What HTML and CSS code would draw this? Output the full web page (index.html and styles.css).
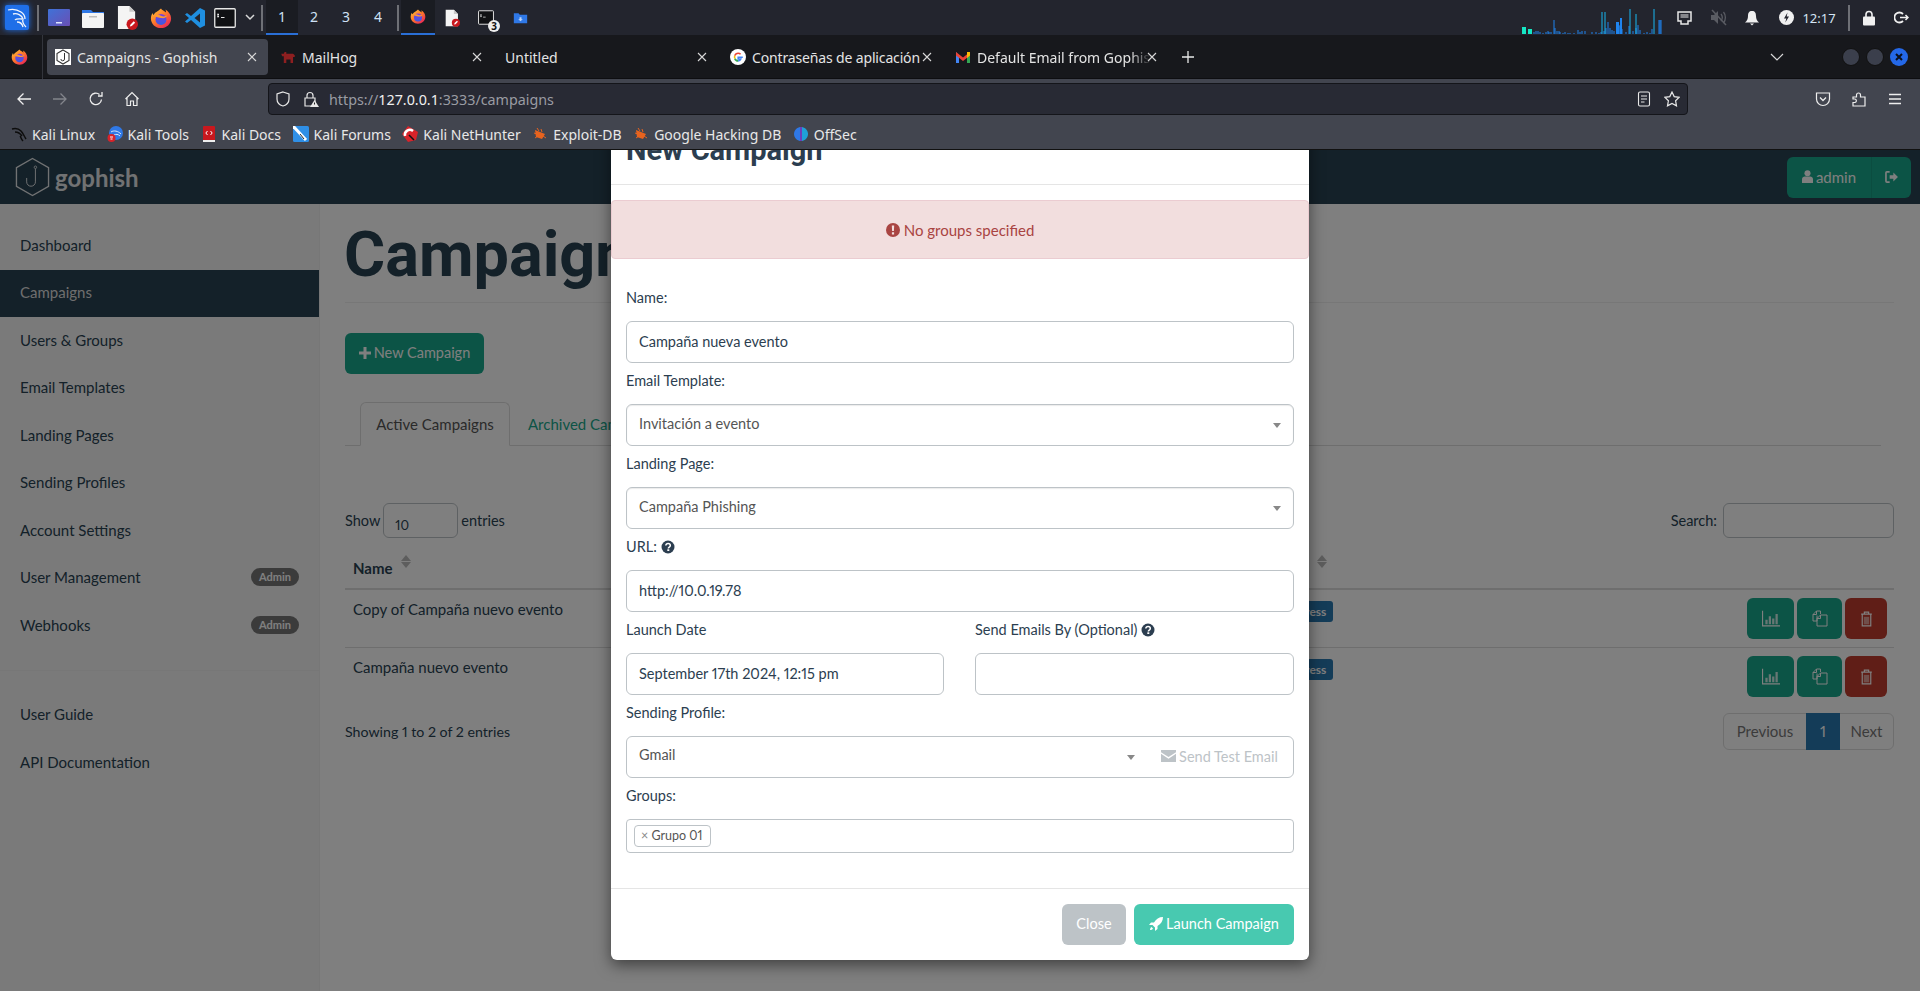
FILE: index.html
```html
<!DOCTYPE html>
<html lang="en">
<head>
    <meta charset="UTF-8">
    <meta name="viewport" content="width=device-width, initial-scale=1.0">
    <title>Campaigns - Gophish</title>
    <link rel="stylesheet" href="styles.css">
</head>
<body>
    <svg class="svg-defs" aria-hidden="true">
        <defs>
            <linearGradient id="ffOuter" x1="0" y1="0" x2="0.8" y2="1">
                <stop offset="0" stop-color="#ffc83a"/>
                <stop offset="0.5" stop-color="#ff7a2a"/>
                <stop offset="1" stop-color="#e8215a"/>
            </linearGradient>
            <linearGradient id="ffInner" x1="0" y1="0" x2="0" y2="1">
                <stop offset="0" stop-color="#7b3ee0"/>
                <stop offset="1" stop-color="#3a5be0"/>
            </linearGradient>
            <linearGradient id="screenGrad" x1="0" y1="0" x2="1" y2="1">
                <stop offset="0" stop-color="#3f72d8"/>
                <stop offset="1" stop-color="#6a4fb4"/>
            </linearGradient>
            <symbol id="firefox" viewBox="0 0 24 24">
                <path d="M12 1.5c1 2 3.800 2.500 5.500 4.500 0-1.300-.2-2.300-.6-3.300C20.500 5 23 8.500 23 12.500 23 18.600 18 23 12 23S1 18.500 1 12.500c0-2.300.7-4.300 1.800-6 .2 1 .6 1.800 1.200 2.300C5 5.500 8.500 5 12 1.500z" fill="url(#ffOuter)"/>
                <circle cx="12" cy="13.500" r="6" fill="url(#ffInner)"/>
                <path d="M4 9c2.500-1.500 5-1 8 .5 3 1.500 5 .5 7-.5-1.500 3-4 3.500-6.500 3-3-.5-6-1-8.500-3z" fill="#ff9a2e"/>
            </symbol>
            <symbol id="docEdit" viewBox="0 0 22 26">
                <path d="M1 1h12l6 6v18H1z" fill="#f4f4f4"/>
                <path d="M13 1l6 6h-6z" fill="#c8c8c8"/>
                <circle cx="16" cy="20" r="6" fill="#c9181e"/>
                <path d="M13.500 22.500l.5-2 3.500-3.500 1.500 1.500-3.500 3.500z" fill="#fff"/>
            </symbol>
            <symbol id="termBox" viewBox="0 0 22 20">
                <rect x="0.750" y="0.750" width="20.500" height="18.500" rx="1" fill="#101114" stroke="#e8e8e8" stroke-width="1.300"/>
                <path d="M4 5.500v4M3.500 6.500h1.500M3.500 8.500h1.500M7 9.500h3.500" stroke="#e8e8e8" stroke-width="1" fill="none"/>
            </symbol>
            <symbol id="folderBlue" viewBox="0 0 22 18">
                <path d="M1 2h7l2 2h11v13H1z" fill="#2f78e6"/>
                <path d="M9.500 8h3v3h2l-3.500 3-3.500-3h2z" fill="#bcd4f8"/>
            </symbol>
            <symbol id="closeX" viewBox="0 0 12 12">
                <path d="M2 2l8 8M10 2l-8 8" stroke="#d8d8d8" stroke-width="1.100" fill="none"/>
            </symbol>
            <symbol id="bug" viewBox="0 0 16 16">
                <path d="M3 4l10 4-3 5-6-2z" fill="#e8631e"/>
                <path d="M5 2l2 3M2 7l3 1M3 12l3-2M9 3l1 3M14 12l-3-2" stroke="#e8631e" stroke-width="1" fill="none"/>
            </symbol>
            <symbol id="icoChart" viewBox="0 0 16 14">
                <path d="M.5 0v13.500H16" stroke="currentColor" stroke-width="1" fill="none"/>
                <path d="M3 8h2v4H3zM6 5h2v7H6zM9 7h2v5H9zM12 3h2v9h-2z" fill="currentColor" opacity="0.800"/>
            </symbol>
            <symbol id="icoCopy" viewBox="0 0 16 17">
                <path d="M5 5.500V11H1V4.500L4.500 1h4v3M1 4.500h3.500V1M5 8.500L8.500 5H15v11H5zM5 8.500h3.500V5" stroke="currentColor" stroke-width="1" fill="none"/>
            </symbol>
            <symbol id="icoTrash" viewBox="0 0 12 15">
                <path d="M1 3h10M4 3V1h4v2M2 3v11h8V3" stroke="currentColor" stroke-width="1.100" fill="none"/>
                <path d="M3.500 5.500h5v7h-5z" fill="currentColor" opacity="0.500"/>
            </symbol>
            <symbol id="icoQuestion" viewBox="0 0 14 14">
                <circle cx="7" cy="7" r="6.500" fill="#2c3e50"/>
                <path d="M4.800 5.500C5 4 6 3.600 7.100 3.600c1.300 0 2.200.8 2.200 1.900 0 1.600-2 1.600-2 3" stroke="#fff" stroke-width="1.500" fill="none"/>
                <rect x="6.300" y="9.300" width="2" height="1.700" fill="#fff"/>
            </symbol>
        </defs>
    </svg>

    <!-- desktop panel -->
    <div class="panel">
        <div class="panel-cell"><svg class="kali-logo" viewBox="0 0 24 25"><rect width="24" height="25" rx="2" fill="#1f6fe8"/><path d="M3 5c5-1.500 10 0 13 2 3 2 4 4 4 7M8 9c4-1 9 1 10 5-1 3 0 5 3 8M17 14c-3 0-6-.5-7 1M12 17c3 0 5 1 6 5" stroke="#f2f6fd" stroke-width="1.300" fill="none"/></svg></div>
        <span class="panel-sep"></span>
        <div class="panel-cell"><svg width="22" height="17" viewBox="0 0 22 17"><rect width="22" height="17" rx="1" fill="url(#screenGrad)"/><rect x="8" y="13" width="6" height="1.500" fill="#dfe6ff"/></svg></div>
        <div class="panel-cell"><svg width="22" height="20" viewBox="0 0 22 20"><path d="M0 2h9l2 2h11v3H0z" fill="#2f78e6"/><rect y="5" width="22" height="15" rx="1" fill="#f4f4f4"/><rect x="7" y="8" width="8" height="1.500" fill="#bdbdbd"/></svg></div>
        <div class="panel-cell"><svg width="21" height="25"><use href="#docEdit"/></svg></div>
        <div class="panel-cell"><svg width="22" height="24"><use href="#firefox"/></svg></div>
        <div class="panel-cell"><svg width="22" height="22" viewBox="0 0 22 22"><path d="M16 1l5 2.500v15L16 21 7 13l-4 3-2-1.500L5 11 1 7.500 3 6l4 3z" fill="#1f8fe0"/><path d="M16 6.500L10.500 11l5.500 4.500z" fill="#23252e"/></svg></div>
        <div class="panel-cell panel-term"><svg width="22" height="20"><use href="#termBox"/></svg></div>
        <div class="panel-chevron"><svg width="10" height="7" viewBox="0 0 10 7"><path d="M1 1l4 4 4-4" stroke="#d8d8d8" stroke-width="1.500" fill="none"/></svg></div>
        <span class="panel-sep panel-sep-b"></span>
        <div class="workspace workspace-on">1</div>
        <div class="workspace">2</div>
        <div class="workspace">3</div>
        <div class="workspace">4</div>
        <span class="panel-sep panel-sep-c"></span>
        <div class="panel-cell task-on"><svg width="16" height="17"><use href="#firefox"/></svg></div>
        <div class="panel-cell"><svg width="15" height="18"><use href="#docEdit"/></svg></div>
        <div class="panel-cell task-term">
            <svg width="16" height="15"><use href="#termBox"/></svg>
            <span class="task-count">3</span>
        </div>
        <div class="panel-cell"><svg width="15" height="12"><use href="#folderBlue"/></svg></div>

        <svg class="netgraph" width="140" height="34" viewBox="0 0 140 34">
            <path d="M0 27h4v7H0zM6 29h4v5H6z" fill="#15e6c4"/>
            <path d="M12 32v2M14 31v3M16 31v3M18 32v2M21 33v1M24 32v2M26 31v3M27 32v2M29 32v2M32 20v14M33 28v6M35 31v3M37 31v3M38 32v2M41 33v1M43 32v2M46 33v1M48 33v1M52 33v1M56 30v4M58 32v2M60 31v3M63 31v3M70 32v2M74 32v2M77 33v1M79 32v2M82 31v3M84 28v6M86 22v12M88 28v6M90 30v4M92 31v3M97 26v8M98 25v9M100 29v5M104 32v2M107 26v8M111 31v3M114 28v6M116 25v9M118 30v4M122 33v1M125 32v2M128 33v1M130 29v5M138 20v14M139 20v14M137 20v14" stroke="#1f84ee" stroke-width="1" fill="none"/>
            <path d="M80 12v22M83 12v22M108 9v25M114 14v20M132 9v25" stroke="#18b7f0" stroke-width="1" fill="none"/>
            <path d="M79 26v8M85 26v8M94 22h3v12h-3zM98 18h2v16h-2z" fill="#1f84ee"/>
        </svg>
        <div class="panel-cell tray-first"><svg width="15" height="14" viewBox="0 0 15 14"><path d="M1 1h13v9h-3v3H4v-3H1z" fill="none" stroke="#e8e8e8" stroke-width="1.500"/><path d="M3.500 4h8M3.500 6h8" stroke="#e8e8e8" stroke-width="1"/></svg></div>
        <div class="panel-cell"><svg width="17" height="17" viewBox="0 0 17 17"><path d="M1 6h3l4-4v13l-4-4H1z" fill="#5a5c63"/><path d="M11 5c1.500 2 1.500 5 0 7M13.500 3c2.500 3 2.500 8 0 11" stroke="#5a5c63" stroke-width="1.300" fill="none"/><path d="M2 1l14 15" stroke="#5a5c63" stroke-width="1.500"/></svg></div>
        <div class="panel-cell"><svg width="14" height="16" viewBox="0 0 14 16"><path d="M7 1c3 0 4 2 4 5 0 3 1 5 3 6.500H0C2 11 3 9 3 6c0-3 1-5 4-5z" fill="#f0f0f0"/><path d="M5 13.500h4l-2 2z" fill="#f0f0f0"/></svg></div>
        <div class="panel-cell"><svg width="15" height="15" viewBox="0 0 15 15"><circle cx="7.500" cy="7.500" r="7.500" fill="#f0f0f0"/><path d="M8.500 2.500L5 8.500h2.300l-1 4 3.700-6H7.700z" fill="#23252e"/></svg></div>
        <div class="panel-clock">12:17</div>
        <span class="panel-sep panel-sep-d"></span>
        <div class="panel-cell panel-cell-sm"><svg width="12" height="16" viewBox="0 0 12 16"><path d="M3 7V4.500a3 3 0 0 1 6 0V7" stroke="#f0f0f0" stroke-width="1.600" fill="none"/><rect y="6.500" width="12" height="9" rx="1" fill="#f0f0f0"/></svg></div>
        <div class="panel-cell panel-cell-sm"><svg width="15" height="13" viewBox="0 0 15 13"><path d="M9 3a5 5 0 1 0 0 7" stroke="#f0f0f0" stroke-width="1.800" fill="none"/><path d="M6 6.500h8M11.500 4l2.500 2.500-2.500 2.500" stroke="#f0f0f0" stroke-width="1.500" fill="none"/></svg></div>
    </div>

    <!-- browser tabs -->
    <div class="tabstrip">
        <div class="ff-menu"><svg width="17" height="18"><use href="#firefox"/></svg></div>
        <div class="browser-tab browser-tab-on">
            <svg class="fav" viewBox="0 0 16 16"><rect width="16" height="16" fill="#fff"/><path d="M8 1l6 3.500v7L8 15l-6-3.500v-7z" fill="none" stroke="#333" stroke-width="1.100"/><path d="M9.500 4v6a1.800 1.800 0 0 1-3.600 0" fill="none" stroke="#333" stroke-width="1"/></svg>
            <span class="tab-title">Campaigns - Gophish</span>
            <svg class="tab-close"><use href="#closeX"/></svg>
        </div>
        <div class="browser-tab">
            <svg class="fav" viewBox="-1.500 -1.500 19 19"><path d="M0 4h3l1-2h2v2h8l2 2v2h-2v7h-3v-4H6v4H3V7H1z" fill="#8e1f20"/></svg>
            <span class="tab-title">MailHog</span>
            <svg class="tab-close"><use href="#closeX"/></svg>
        </div>
        <div class="browser-tab browser-tab-plain">
            <span class="tab-title">Untitled</span>
            <svg class="tab-close"><use href="#closeX"/></svg>
        </div>
        <div class="browser-tab">
            <svg class="fav" viewBox="0 0 16 16"><circle cx="8" cy="8" r="8" fill="#fff"/><path d="M12.800 8.200H8.200v1.800h2.600c-.4 1.200-1.400 1.900-2.700 1.900" fill="none" stroke="#4285f4" stroke-width="1.600"/><path d="M8.100 11.900c-1.500 0-2.800-1-3.300-2.300" fill="none" stroke="#34a853" stroke-width="1.600"/><path d="M4.800 9.600c-.3-1-.3-2 0-3" fill="none" stroke="#fbbc05" stroke-width="1.600"/><path d="M4.800 6.600c.5-1.400 1.800-2.400 3.300-2.400 1 0 1.800.3 2.500 1" fill="none" stroke="#ea4335" stroke-width="1.600"/></svg>
            <span class="tab-title tab-title-fit">Contraseñas de aplicación</span>
            <svg class="tab-close"><use href="#closeX"/></svg>
        </div>
        <div class="browser-tab">
            <svg class="fav" viewBox="0 0 16 16"><path d="M1 3v11h3V7z" fill="#4285f4"/><path d="M15 3v11h-3V7z" fill="#34a853"/><path d="M1 3l7 5.500L15 3v3.500L8 12 1 6.500z" fill="#ea4335"/><path d="M12 3h3v3.500L12 9z" fill="#fbbc05"/></svg>
            <span class="tab-title tab-title-fade">Default Email from Gophish</span>
            <svg class="tab-close"><use href="#closeX"/></svg>
        </div>
        <svg class="tab-new" viewBox="0 0 14 14"><path d="M7 1v12M1 7h12" stroke="#e8e8e8" stroke-width="1.300" fill="none"/></svg>
        <svg class="tab-list" viewBox="0 0 14 8"><path d="M1 1l6 6 6-6" stroke="#d8d8d8" stroke-width="1.200" fill="none"/></svg>
        <span class="win-btn"></span>
        <span class="win-btn"></span>
        <span class="win-btn win-btn-close"><svg width="8" height="8" viewBox="0 0 8 8"><path d="M1 1l6 6M7 1L1 7" stroke="#0a0f1c" stroke-width="2"/></svg></span>
    </div>

    <!-- browser toolbar -->
    <div class="toolbar">
        <div class="nav-btns">
            <svg class="tool-ico" viewBox="0 0 16 16"><path d="M15 8H2M7.500 2.500L2 8l5.500 5.500" stroke="#eee" stroke-width="1.300" fill="none"/></svg>
            <svg class="tool-ico" viewBox="0 0 16 16"><path d="M1 8h13M8.500 2.500L14 8l-5.500 5.500" stroke="#83858c" stroke-width="1.300" fill="none"/></svg>
            <svg class="tool-ico" viewBox="0 0 16 16"><path d="M13.500 8.500A5.700 5.700 0 1 1 11.500 3.500M14 1v4h-4" stroke="#eee" stroke-width="1.300" fill="none"/></svg>
            <svg class="tool-ico" viewBox="0 0 16 16"><path d="M1.500 8L8 1.500 14.500 8M3 7v7.500h3.500V10h3v4.500H13V7" stroke="#eee" stroke-width="1.200" fill="none"/></svg>
        </div>
        <div class="urlbar">
            <svg class="url-ico" viewBox="0 0 16 16"><path d="M8 1l6 2v5c0 3.500-2.500 6-6 7-3.500-1-6-3.500-6-7V3z" stroke="#e8e8e8" stroke-width="1.200" fill="none"/></svg>
            <svg class="url-ico url-lock" viewBox="0 0 16 16"><path d="M4 7V4.500a3 3 0 0 1 6 0V7M2 7h10v8H2z" stroke="#e8e8e8" stroke-width="1.200" fill="none"/><path d="M11.500 9L16 16H7z" fill="#e8e8e8"/><path d="M11.500 11.500v2" stroke="#222" stroke-width="1"/></svg>
            <span class="url-text">https://<b>127.0.0.1</b>:3333/campaigns</span>
            <svg class="url-end" viewBox="0 0 16 16"><rect x="2.500" y="1" width="11" height="14" rx="1.500" stroke="#e8e8e8" stroke-width="1.100" fill="none"/><path d="M5 5h6M5 8h6M5 11h3.500" stroke="#e8e8e8" stroke-width="1"/></svg>
            <svg class="url-end url-star" viewBox="0 0 16 16"><path d="M8 1l2.200 4.600 5 .7-3.600 3.500.9 5L8 12.400l-4.500 2.400.9-5L.8 6.300l5-.7z" stroke="#e8e8e8" stroke-width="1.200" fill="none"/></svg>
        </div>
        <svg class="tool-ico tool-pocket" viewBox="0 0 16 16"><path d="M1.500 2h13v6a6.500 6.500 0 0 1-13 0z" stroke="#eee" stroke-width="1.200" fill="none"/><path d="M5 6.500l3 3 3-3" stroke="#eee" stroke-width="1.300" fill="none"/></svg>
        <svg class="tool-ico" viewBox="0 0 16 16"><path d="M2 6h3.500V4a2 2 0 0 1 4 0v2H14v9H2v-3.500h2a1.800 1.800 0 0 0 0-3.500H2z" stroke="#eee" stroke-width="1.200" fill="none"/></svg>
        <svg class="tool-ico" viewBox="0 0 16 16"><path d="M2 3.500h12M2 8h12M2 12.500h12" stroke="#eee" stroke-width="1.300" fill="none"/></svg>
    </div>

    <!-- bookmarks -->
    <div class="bookmarks">
        <div class="bookmark"><svg class="bm-ico" viewBox="0 0 16 16"><path d="M1 3c4-1 7 0 9 2 2 2 3 5 5 8M4 6c3 0 5 1 7 4M9 10c1 1 1 3 3 5" stroke="#0d0d0d" stroke-width="1.500" fill="none"/></svg>Kali Linux</div>
        <div class="bookmark"><svg class="bm-ico" viewBox="0 0 16 16"><circle cx="9" cy="7" r="7" fill="#2f78e6"/><path d="M4 6c3-2 7-1 10 2M7 9c2-1 4-1 6 1" stroke="#d8e6fb" stroke-width="1" fill="none"/><circle cx="4.500" cy="12" r="4" fill="#d8232a"/><path d="M3 11h3M3.500 13h2" stroke="#fff" stroke-width="1"/></svg>Kali Tools</div>
        <div class="bookmark"><svg class="bm-ico" viewBox="0 0 16 16"><rect x="2" y="0" width="12" height="15" rx="1" fill="#c9181e"/><path d="M2 14h12v2H2z" fill="#eee"/><path d="M6.500 5L4.800 7l1.700 2M9.500 5l1.700 2-1.700 2" stroke="#fff" stroke-width="1" fill="none"/></svg>Kali Docs</div>
        <div class="bookmark"><svg class="bm-ico" viewBox="0 0 16 16"><rect width="16" height="16" rx="1.500" fill="#2f8fe6"/><path d="M0 0l13 14" stroke="#fff" stroke-width="3"/><path d="M7 8l4 5" stroke="#222" stroke-width="1"/></svg>Kali Forums</div>
        <div class="bookmark"><svg class="bm-ico" viewBox="0 0 16 16"><path d="M6 0l10 6-2 8-8 2-6-8z" fill="#d8232a"/><path d="M3 10a5 5 0 0 1 8-5" stroke="#fff" stroke-width="2.500" fill="none"/><path d="M7 9l5 5" stroke="#111" stroke-width="1.500"/></svg>Kali NetHunter</div>
        <div class="bookmark"><svg class="bm-ico"><use href="#bug"/></svg>Exploit-DB</div>
        <div class="bookmark"><svg class="bm-ico"><use href="#bug"/></svg>Google Hacking DB</div>
        <div class="bookmark"><svg class="bm-ico" viewBox="0 0 16 16"><path d="M7 1C3 2 1 5 1 8s2 6 6 7z" fill="#2f78e6"/><path d="M9 1c4 1 6 4 6 7s-2 6-6 7z" fill="#1fa0d8"/><path d="M8 1v14" stroke="#7a3ee0" stroke-width="1.500"/></svg>OffSec</div>
    </div>

    <!-- gophish page -->
    <div class="page">
        <nav class="navbar">
            <svg class="logo-mark" viewBox="0 0 36 40"><path d="M18 1l16.500 9.500v19L18 39 1.500 29.500v-19z" fill="none" stroke="#e2e4e6" stroke-width="1.400"/><circle cx="21" cy="10" r="1.300" fill="none" stroke="#e2e4e6" stroke-width="0.900"/><path d="M21 11.500V25a4.500 4.500 0 0 1-9 0v-4" fill="none" stroke="#e2e4e6" stroke-width="1"/></svg>
            <span class="logo-text">gophish</span>
            <div class="user-group">
                <div class="user-btn">
                    <svg class="user-ico" viewBox="0 0 12 14"><circle cx="6" cy="3.500" r="3.300" fill="currentColor"/><path d="M0 14V10c0-2 1.500-3 3-3h6c1.500 0 3 1 3 3v4z" fill="currentColor"/></svg>admin
                </div>
                <div class="user-out">
                    <svg class="out-ico" viewBox="0 0 14 13"><path d="M5 1H2a1 1 0 0 0-1 1v9a1 1 0 0 0 1 1h3" fill="none" stroke="currentColor" stroke-width="1.800"/><path d="M5 4.500h4V1.500l5 5-5 5v-3H5z" fill="currentColor"/></svg>
                </div>
            </div>
        </nav>

        <div class="layout">
            <aside class="sidebar">
                <ul class="side-nav">
                    <li>Dashboard</li>
                    <li class="side-on">Campaigns</li>
                    <li>Users &amp; Groups</li>
                    <li>Email Templates</li>
                    <li>Landing Pages</li>
                    <li>Sending Profiles</li>
                    <li>Account Settings</li>
                    <li>User Management <span class="side-badge">Admin</span></li>
                    <li>Webhooks <span class="side-badge">Admin</span></li>
                </ul>
                <div class="side-divider"></div>
                <ul class="side-nav">
                    <li>User Guide</li>
                    <li>API Documentation</li>
                </ul>
            </aside>

            <main class="content">
                <div class="page-header"><h1>Campaigns</h1></div>
                <button class="btn btn-new"><svg class="plus-ico" viewBox="0 0 12 12"><path d="M4.500 0h3v4.500H12v3H7.500V12h-3V7.500H0v-3h4.500z" fill="currentColor"/></svg>New Campaign</button>
                <div class="tabs">
                    <div class="tab tab-on">Active Campaigns</div>
                    <div class="tab tab-link">Archived Campaigns</div>
                </div>
                <div class="table-top">
                    <div class="entries">Show <span class="entries-box">10</span> entries</div>
                    <div class="search">Search: <span class="search-box"></span></div>
                </div>
                <div class="row row-head">
                    <div class="cell-name">Name <span class="sort"><i class="sort-up"></i><i class="sort-down"></i></span></div>
                    <div class="cell-status">Status <span class="sort sort-status"><i class="sort-up"></i><i class="sort-down"></i></span></div>
                </div>
                <div class="row">
                    <div class="cell-name">Copy of Campaña nuevo evento</div>
                    <div class="cell-status"><span class="status-badge">In progress</span></div>
                    <div class="cell-actions">
                        <span class="act act-chart"><svg class="act-ico"><use href="#icoChart"/></svg></span>
                        <span class="act act-copy"><svg class="act-ico"><use href="#icoCopy"/></svg></span>
                        <span class="act act-del"><svg class="act-ico act-ico-sm"><use href="#icoTrash"/></svg></span>
                    </div>
                </div>
                <div class="row row-last">
                    <div class="cell-name">Campaña nuevo evento</div>
                    <div class="cell-status"><span class="status-badge">In progress</span></div>
                    <div class="cell-actions">
                        <span class="act act-chart"><svg class="act-ico"><use href="#icoChart"/></svg></span>
                        <span class="act act-copy"><svg class="act-ico"><use href="#icoCopy"/></svg></span>
                        <span class="act act-del"><svg class="act-ico act-ico-sm"><use href="#icoTrash"/></svg></span>
                    </div>
                </div>
                <div class="table-bottom">
                    <div class="showing">Showing 1 to 2 of 2 entries</div>
                    <div class="pager">
                        <span class="pager-item pager-prev">Previous</span>
                        <span class="pager-item pager-on">1</span>
                        <span class="pager-item pager-next">Next</span>
                    </div>
                </div>
            </main>
        </div>

        <div class="backdrop"></div>

        <div class="modal">
            <div class="modal-header"><h4>New Campaign</h4></div>
            <div class="alert">
                <svg class="alert-ico" viewBox="0 0 14 14"><circle cx="7" cy="7" r="7" fill="#a94442"/><path d="M5.800 2.500h2.400l-.3 5.500H6.100zM5.900 9.200h2.200v2.200H5.900z" fill="#f2dede"/></svg>No groups specified
            </div>
            <div class="modal-body">
                <label>Name:</label>
                <div class="field">Campaña nueva evento</div>
                <label>Email Template:</label>
                <div class="field field-select">Invitación a evento<i class="caret"></i></div>
                <label>Landing Page:</label>
                <div class="field field-select">Campaña Phishing<i class="caret"></i></div>
                <label>URL: <svg class="help-ico"><use href="#icoQuestion"/></svg></label>
                <div class="field">http://10.0.19.78</div>
                <div class="two-col">
                    <div>
                        <label>Launch Date</label>
                        <div class="field">September 17th 2024, 12:15 pm</div>
                    </div>
                    <div>
                        <label>Send Emails By (Optional) <svg class="help-ico"><use href="#icoQuestion"/></svg></label>
                        <div class="field"></div>
                    </div>
                </div>
                <label>Sending Profile:</label>
                <div class="field field-profile">
                    <div class="profile-select">Gmail<i class="caret"></i></div>
                    <div class="profile-test"><svg class="mail-ico" viewBox="0 0 14 11"><path d="M0 0h14v2L7 6.500 0 2z" fill="currentColor"/><path d="M0 3.500l7 4.500 7-4.500V11H0z" fill="currentColor"/></svg>Send Test Email</div>
                </div>
                <label>Groups:</label>
                <div class="groups"><span class="group-tag"><span class="tag-x">×</span> Grupo 01</span></div>
            </div>
            <div class="modal-footer">
                <button class="btn btn-close">Close</button>
                <button class="btn btn-launch"><svg class="rocket-ico" viewBox="0 0 14 14"><path d="M14 0c-4 0-7 2-9 5.500H2L0 8h3.500L6 10.500V14l2.500-2V9C12 7 14 4 14 0z" fill="currentColor"/><path d="M2.500 10c-1 .5-1.500 2-1.500 3 1 0 2.500-.5 3-1.500z" fill="currentColor"/></svg>Launch Campaign</button>
            </div>
        </div>
    </div>
</body>
</html>
```

FILE: styles.css
```css
* {
    box-sizing: border-box;
}

html, body {
    margin: 0;
    height: 991px;
    overflow: hidden;
}

body {
    font-family: "Noto Sans", sans-serif;
    background-color: #808080;
}

.svg-defs {
    position: absolute;
    width: 0;
    height: 0;
}

/* desktop panel */
.panel {
    height: 35px;
    display: flex;
    align-items: stretch;
    background-color: #23252e;
    color: #e8e8e8;
    padding-right: 3px;
}

.panel-cell {
    width: 34px;
    display: flex;
    align-items: center;
    justify-content: center;
    position: relative;
}

.panel-cell-sm {
    width: 32px;
}

.kali-logo {
    width: 24px;
    height: 25px;
    filter: drop-shadow(0 0 3px #1f6fe8);
}

.panel-sep {
    width: 2px;
    height: 26px;
    margin: 5px 3px 0 3px;
    background-color: #6e7076;
}

.panel-sep-b {
    margin: 5px 3px 0 3px;
}

.panel-sep-c {
    margin: 5px 2px 0 3px;
}

.panel-sep-d {
    margin: 5px 3px 0 14px;
}

.panel-term {
    margin-left: -4px;
}

.panel-chevron {
    width: 16px;
    display: flex;
    align-items: center;
    justify-content: center;
}

.workspace {
    width: 32px;
    display: flex;
    align-items: center;
    justify-content: center;
    font-size: 14px;
    color: #cfe1f5;
    border-bottom: 2px solid transparent;
}

.workspace-on {
    background-color: #1a1c22;
    border-bottom-color: #2a6fd6;
}

.task-on {
    background-color: #1a1c22;
    border-bottom: 2px solid #2a6fd6;
}

.task-count {
    position: absolute;
    right: 3px;
    bottom: 3px;
    width: 12px;
    height: 12px;
    border-radius: 50%;
    background-color: #eee;
    color: #111;
    font-size: 10px;
    font-weight: 700;
    line-height: 12px;
    text-align: center;
}

.netgraph {
    margin-left: auto;
    align-self: flex-start;
}

.tray-first {
    margin-left: 5px;
}

.panel-clock {
    width: 30px;
    margin-left: 1px;
    display: flex;
    align-items: center;
    justify-content: center;
    font-size: 13px;
    color: #d6e6f5;
}

/* browser tabs */
.tabstrip {
    height: 44px;
    display: flex;
    align-items: center;
    background-color: #17181c;
    border-bottom: 1px solid #0e0e11;
    color: #e4e4e4;
    font-size: 14px;
}

.ff-menu {
    width: 43px;
    height: 44px;
    display: flex;
    align-items: center;
    justify-content: center;
    padding-right: 4px;
    border-right: 1px solid #33353c;
    margin-right: 4px;
}

.browser-tab {
    width: 221px;
    height: 36px;
    margin-right: 4px;
    border-radius: 4px;
    display: flex;
    align-items: center;
    padding-left: 8px;
    position: relative;
}

.browser-tab-on {
    background-color: #42454f;
}

.fav {
    width: 16px;
    height: 16px;
    margin-right: 6px;
    flex-shrink: 0;
}

.tab-title {
    white-space: nowrap;
    overflow: hidden;
    width: 174px;
    display: block;
    padding-top: 2px;
}

.tab-title-fit {
    letter-spacing: -0.15px;
    width: 176px;
}

.tab-title-fade {
    -webkit-mask-image: linear-gradient(to right, #000 88%, transparent 100%);
    mask-image: linear-gradient(to right, #000 88%, transparent 100%);
}

.tab-close {
    position: absolute;
    left: 199px;
    top: 12px;
    width: 12px;
    height: 12px;
}

.tab-new {
    width: 14px;
    height: 14px;
    margin-left: 9px;
}

.tab-list {
    width: 14px;
    height: 8px;
    margin-left: auto;
    margin-right: 58px;
}

.win-btn {
    width: 18px;
    height: 18px;
    margin-right: 6px;
    border-radius: 50%;
    background-color: #3b3f4c;
    border: 1px solid #111;
    display: flex;
    align-items: center;
    justify-content: center;
}

.win-btn-close {
    background-color: #2468e8;
    margin-right: 12px;
    border: 0;
}

/* browser toolbar */
.toolbar {
    height: 40px;
    background-color: #42454f;
    display: flex;
    align-items: center;
    padding-left: 16px;
    padding-right: 17px;
    gap: 20px;
}

.nav-btns {
    display: flex;
    gap: 20px;
}

.tool-ico {
    width: 16px;
    height: 16px;
    flex-shrink: 0;
}

.tool-pocket {
    margin-left: 107px;
}

.urlbar {
    width: 1422px;
    height: 32px;
    margin-left: 108px;
    background-color: #282a34;
    border: 1px solid #14151a;
    border-radius: 4px;
    display: flex;
    align-items: center;
    padding-left: 6px;
    padding-right: 5px;
    color: #9a9ca3;
    font-size: 14.3px;
}

.url-ico {
    width: 16px;
    height: 16px;
}

.url-lock {
    margin-left: 12px;
    margin-right: 10px;
}

.url-text b {
    font-weight: 400;
    color: #f0f0f0;
}

.url-end {
    width: 16px;
    height: 16px;
    margin-left: auto;
}

.url-star {
    margin-left: 12px;
    margin-right: 2px;
}

.bookmarks {
    height: 31px;
    background-color: #42454f;
    display: flex;
    align-items: flex-start;
    padding-left: 11px;
    padding-top: 5px;
    gap: 11.5px;
    color: #e8e8e8;
    font-size: 14px;
    border-bottom: 1px solid #111;
}

.bookmark {
    display: flex;
    align-items: center;
    height: 20px;
    white-space: nowrap;
}

.bm-ico {
    width: 16px;
    height: 16px;
    margin-right: 5px;
}

/* gophish page */
.page {
    position: relative;
    height: 841px;
    overflow: hidden;
    font-family: "Lato", sans-serif;
    font-variant-numeric: proportional-nums;
    font-size: 15px;
    color: #2c3e50;
    background-color: #fff;
}

.navbar {
    height: 54px;
    background-color: #284252;
    display: flex;
    align-items: center;
    padding-left: 15px;
}

.logo-mark {
    width: 35px;
    height: 40px;
    margin-right: 5px;
}

.logo-text {
    font-size: 24px;
    font-weight: 700;
    color: #e2e4e6;
    margin-top: 1px;
}

.user-group {
    margin-left: auto;
    margin-right: 9px;
    display: flex;
    height: 41px;
    color: #fff;
}

.user-btn {
    width: 85px;
    background-color: #19a88c;
    border-radius: 6px 0 0 6px;
    display: flex;
    align-items: center;
    justify-content: center;
    padding-bottom: 1px;
    border-right: 1px solid #179a80;
}

.user-ico {
    width: 11px;
    height: 13px;
    margin-right: 3px;
}

.user-out {
    width: 39px;
    background-color: #19a88c;
    border-radius: 0 6px 6px 0;
    display: flex;
    align-items: center;
    justify-content: center;
}

.out-ico {
    width: 13px;
    height: 12px;
}

.layout {
    display: flex;
    height: 787px;
}

.sidebar {
    width: 320px;
    flex-shrink: 0;
    background-color: #f5f5f5;
    border-right: 1px solid #eee;
    padding-top: 18px;
}

.side-nav {
    list-style: none;
    margin: 0;
    padding: 0;
    color: #284252;
}

.side-nav li {
    height: 47.5px;
    padding: 0 20px 2px 20px;
    display: flex;
    align-items: center;
    justify-content: space-between;
}

.side-nav .side-on {
    background-color: #284252;
    color: #ddd;
}

.side-badge {
    width: 48px;
    height: 18px;
    border-radius: 9px;
    background-color: #777;
    color: #fff;
    font-size: 11px;
    font-weight: 700;
    text-align: center;
    line-height: 18px;
}

.side-divider {
    height: 1px;
    margin: 20px 0 21px 0;
    background-color: #eee;
}

.content {
    flex: 1;
    padding: 0 26px 0 25px;
    color: #284252;
}

.page-header {
    height: 99px;
    padding-top: 16px;
    border-bottom: 1px solid #eee;
}

h1 {
    margin: 0 0 0 -1px;
    font-family: "Roboto", sans-serif;
    font-size: 63px;
    font-weight: 700;
    line-height: 69px;
}

.btn {
    height: 41px;
    border: 0;
    border-radius: 6px;
    color: #fff;
    font-family: "Lato", sans-serif;
    font-size: 14.5px;
    padding: 0 0 2px 0;
    display: inline-flex;
    align-items: center;
    justify-content: center;
}

.btn-new {
    width: 139px;
    margin-top: 30px;
    background-color: #19a88c;
}

.plus-ico {
    width: 12px;
    height: 12px;
    margin-right: 3px;
}

.tabs {
    margin-top: 28px;
    margin-right: 13px;
    height: 44px;
    display: flex;
    padding-left: 15px;
    border-bottom: 1px solid #ddd;
}

.tab {
    height: 44px;
    padding: 0 16px 1px 16px;
    display: flex;
    align-items: center;
}

.tab-on {
    width: 150px;
    padding: 0 0 1px 0;
    justify-content: center;
    background-color: #fff;
    border: 1px solid #ddd;
    border-bottom-color: #fff;
    border-radius: 6px 6px 0 0;
    color: #555;
}

.tab-on + .tab {
    padding-left: 18px;
}

.tab-link {
    color: #19a88c;
}

.table-top {
    margin-top: 57px;
    height: 35px;
    display: flex;
    justify-content: space-between;
    align-items: center;
    font-size: 14.5px;
}

.entries {
    display: flex;
    align-items: center;
    gap: 3px;
}

.entries-box {
    width: 75px;
    height: 35px;
    border: 1px solid #bdc3c7;
    border-radius: 6px;
    font-size: 13px;
    padding: 13px 0 0 11px;
    line-height: 16px;
}

.search {
    display: flex;
    align-items: center;
    gap: 6px;
}

.search-box {
    width: 171px;
    height: 35px;
    border: 1px solid #bdc3c7;
    border-radius: 6px;
}

.row {
    display: grid;
    grid-template-columns: 908px 1fr auto;
    height: 58px;
    border-bottom: 1px solid #ddd;
}

.row-head {
    height: 52px;
    border-bottom: 2px solid #ddd;
    font-weight: 700;
    align-items: center;
    padding-top: 10px;
}

.row-last {
    border-bottom: 0;
}

.cell-name {
    padding: 10px 8px 0 8px;
}

.row-head .cell-name,
.row-head .cell-status {
    padding-top: 0;
    padding-left: 8px;
    display: flex;
    align-items: center;
    gap: 8px;
}

.cell-status {
    padding: 11px 0 0 8px;
}

.status-badge {
    display: inline-block;
    width: 72px;
    height: 21px;
    background-color: #2878b0;
    color: #fff;
    border-radius: 3px;
    font-size: 12px;
    font-weight: 700;
    line-height: 21px;
    text-align: center;
}

.sort {
    display: flex;
    flex-direction: column;
    gap: 1px;
    margin-top: -14px;
}

.sort-status {
    margin-left: 6px;
}

.sort i {
    display: block;
    width: 0;
    height: 0;
    border-left: 5px solid transparent;
    border-right: 5px solid transparent;
}

.sort-up {
    border-bottom: 6px solid #bbb;
}

.sort-down {
    border-top: 6px solid #bbb;
}

.cell-actions {
    display: flex;
    gap: 3px;
    padding: 8px 7px 0 0;
}

.act {
    height: 41px;
    border-radius: 6px;
    color: #fff;
    display: flex;
    align-items: center;
    justify-content: center;
}

.act-chart {
    width: 47px;
    background-color: #19a88c;
}

.act-copy {
    width: 45px;
    background-color: #19a88c;
}

.act-del {
    width: 42px;
    background-color: #c03d2e;
}

.act-ico {
    width: 18px;
    height: 17px;
}

.act-ico-sm {
    width: 13px;
    height: 16px;
}

.table-bottom {
    display: flex;
    justify-content: space-between;
    align-items: center;
    height: 37px;
    margin-top: 7px;
}

.showing {
    font-size: 14.2px;
}

.pager {
    display: flex;
    height: 37px;
    border: 1px solid #ddd;
    border-radius: 6px;
    color: #777;
}

.pager-item {
    display: flex;
    align-items: center;
    justify-content: center;
    padding-bottom: 2px;
}

.pager-prev {
    width: 82px;
}

.pager-on {
    width: 34px;
    margin: -1px 0;
    background-color: #2878b0;
    color: #fff;
}

.pager-next {
    width: 53px;
}

.backdrop {
    position: absolute;
    inset: 0;
    background-color: rgba(0, 0, 0, 0.5);
}

/* modal */
.modal {
    position: absolute;
    left: 611px;
    top: -28px;
    width: 698px;
    background-color: #fff;
    border-radius: 6px;
    box-shadow: 0 5px 15px rgba(0, 0, 0, 0.5);
}

.modal-header {
    height: 63px;
    padding: 0 15px;
    border-bottom: 1px solid #e5e5e5;
}

h4 {
    margin: 0;
    padding-top: 12px;
    font-family: "Roboto", sans-serif;
    font-size: 29px;
    font-weight: 700;
    line-height: 32px;
}

.alert {
    height: 59px;
    margin-top: 15px;
    background-color: #f2dede;
    border: 1px solid #ebccd1;
    border-radius: 4px;
    color: #a94442;
    display: flex;
    align-items: center;
    justify-content: center;
}

.alert-ico {
    width: 14px;
    height: 14px;
    margin-right: 4px;
}

.modal-body {
    padding: 21px 15px 35px 15px;
    font-size: 14.5px;
}

label {
    display: block;
    height: 41px;
    padding-top: 7px;
    line-height: 22px;
}

.help-ico {
    width: 14px;
    height: 14px;
    vertical-align: -2px;
}

.field {
    height: 42px;
    border: 1px solid #bdc3c7;
    border-radius: 6px;
    padding: 0 12px 2px 12px;
    display: flex;
    align-items: center;
    position: relative;
}

.field-select {
    padding-bottom: 4px;
    color: #555;
    box-shadow: inset 0 1px 1px rgba(0, 0, 0, 0.08);
}

.caret {
    position: absolute;
    right: 12px;
    top: 18px;
    border-left: 4px solid transparent;
    border-right: 4px solid transparent;
    border-top: 5px solid #888;
}

.two-col {
    display: grid;
    grid-template-columns: 318px 319px;
    column-gap: 31px;
}

.field-profile {
    padding: 0;
}

.profile-select {
    width: 519px;
    height: 40px;
    padding-left: 12px;
    color: #555;
    line-height: 36px;
    position: relative;
}

.profile-select .caret {
    right: 11px;
}

.profile-test {
    flex: 1;
    display: flex;
    align-items: center;
    justify-content: center;
    padding-bottom: 2px;
    color: #bdc3c7;
}

.mail-ico {
    width: 15px;
    height: 12px;
    margin-right: 3px;
}

.groups {
    height: 34px;
    border: 1px solid #bdc3c7;
    border-radius: 4px;
    padding: 5px 7px;
}

.group-tag {
    display: inline-block;
    width: 77px;
    height: 22px;
    border: 1px solid #bdc3c7;
    border-radius: 4px;
    font-size: 12.5px;
    line-height: 19px;
    padding-left: 6px;
    color: #555;
    white-space: nowrap;
}

.tag-x {
    color: #888;
}

.modal-footer {
    height: 72px;
    padding: 15px;
    border-top: 1px solid #e5e5e5;
    display: flex;
    justify-content: flex-end;
    gap: 8px;
}

.btn-close {
    width: 64px;
    background-color: #bdc3c7;
}

.btn-launch {
    width: 160px;
    background-color: #48c9b0;
}

.rocket-ico {
    width: 14px;
    height: 14px;
    margin-right: 3px;
}
```
